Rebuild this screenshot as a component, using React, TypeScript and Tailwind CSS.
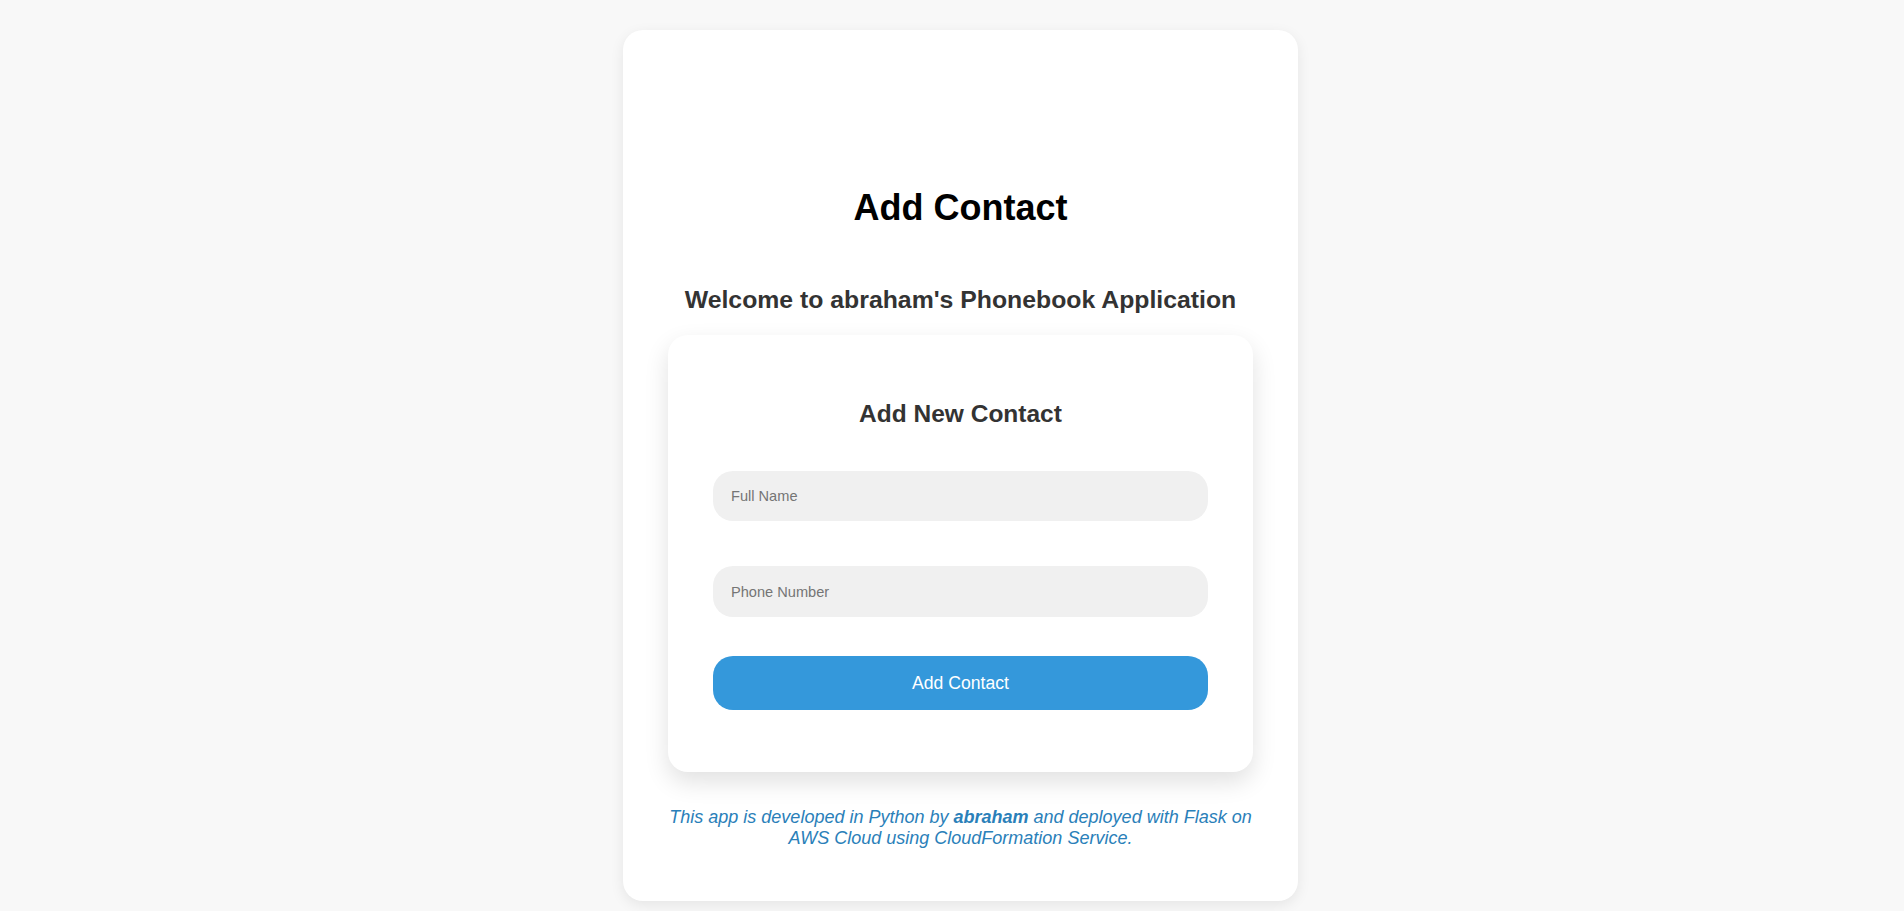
import React from "react";

const font = { fontFamily: '"Liberation Sans", Arial, sans-serif' };

const App = () => {
  return (
    <main
      className="min-h-screen bg-[#f8f8f8] pt-[30px] pl-[17px] flex justify-center items-start"
      style={font}
    >
      <section className="w-[675px] bg-white rounded-[20px] shadow-[0_4px_14px_rgba(0,0,0,0.08)] px-[45px] pt-[157px] pb-[52px] flex flex-col items-center">
        <h1 className="text-[36px] leading-[41px] font-bold text-black">
          Add Contact
        </h1>
        <h2 className="mt-[58px] text-[24.8px] leading-[28px] font-bold text-[#333]">
          Welcome to abraham&apos;s Phonebook Application
        </h2>

        <div className="mt-[21px] w-full bg-white rounded-[20px] shadow-[0_10px_25px_rgba(0,0,0,0.12)] px-[45px] pt-[65px] pb-[62px] flex flex-col">
          <h3 className="text-center text-[24.5px] leading-[28px] font-bold text-[#333]">
            Add New Contact
          </h3>
          <input
            type="text"
            placeholder="Full Name"
            className="mt-[43px] h-[50px] w-full rounded-[20px] bg-[#f0f0f0] pl-[18px] text-[14.6px] text-[#333] placeholder:text-[#757575] outline-none"
          />
          <input
            type="text"
            placeholder="Phone Number"
            className="mt-[45px] h-[51px] w-full rounded-[20px] bg-[#f0f0f0] pl-[18px] text-[14.6px] text-[#333] placeholder:text-[#757575] outline-none"
          />
          <button className="mt-[39px] h-[54px] w-full rounded-[20px] bg-[#3498db] text-white text-[17.6px]">
            Add Contact
          </button>
        </div>

        <p className="mt-[35px] text-center italic text-[18px] leading-[21px] text-[#2a80b9]">
          This app is developed in Python by <b>abraham</b> and deployed with
          Flask on AWS Cloud using CloudFormation Service.
        </p>
      </section>
    </main>
  );
};

export default App;
